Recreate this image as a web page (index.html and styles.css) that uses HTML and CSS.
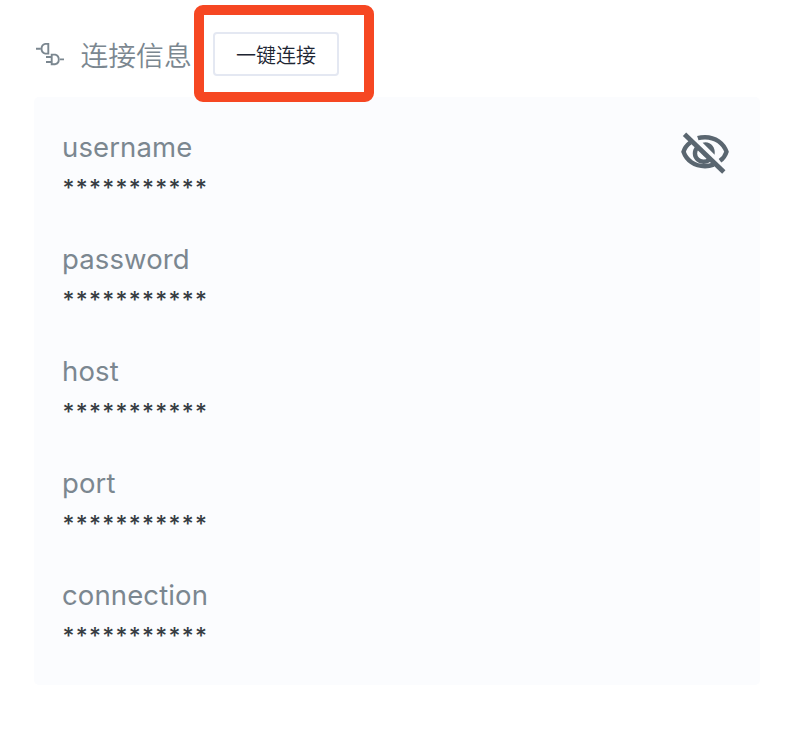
FILE: index.html
```html
<!DOCTYPE html>
<html lang="zh-CN">
<head>
<meta charset="utf-8">
<title>连接信息</title>
<link rel="stylesheet" href="styles.css">
</head>
<body>
<header class="header">
  <svg class="plug" viewBox="0 0 30 26" fill="none" stroke="currentColor" stroke-width="1.9">
    <path d="M0 8.7H4.5M12.3 3.9H9.3A5 5 0 0 0 9.3 13.6H12.3Z"/>
    <path d="M15.7 14.6H19.2A5 5 0 0 1 19.2 24.2H15.7ZM10 17H15.7M10 22H15.7M24 19.4H28"/>
  </svg>
  <h1 class="title">连接信息</h1>
  <div class="highlight"><button class="connect">一键连接</button></div>
</header>
<main class="panel">
  <dl class="fields">
    <div class="field"><dt>username</dt><dd>***********</dd></div>
    <div class="field"><dt>password</dt><dd>***********</dd></div>
    <div class="field"><dt>host</dt><dd>***********</dd></div>
    <div class="field"><dt>port</dt><dd>***********</dd></div>
    <div class="field"><dt>connection</dt><dd>***********</dd></div>
  </dl>
  <svg class="eye" viewBox="0 0 50 44" fill="none" stroke="currentColor" stroke-width="4.4">
    <path d="M10.3 11.5C7 14 4.5 17.3 3.5 20.8C6.5 29.5 14.5 35.2 25 35.2C28 35.2 31 34.6 33.6 33.6"/>
    <path d="M17.8 7.2C20 6.5 22.4 6.2 25 6.2C35.5 6.2 43.4 12.3 46.5 20.8C45.4 24.3 43 27.6 40 29.8"/>
    <path d="M17.3 16.5A8.2 8.2 0 0 0 29.5 28.2"/>
    <path d="M22.6 11.8C29 9.5 36 15.2 34.6 23.8Z" fill="currentColor" stroke="none"/>
    <path d="M21.8 18.5L28.5 25.1C25.8 27 21 23.8 21.8 18.5Z" fill="currentColor" stroke="none"/>
    <path d="M4.5 3.3L43.8 41" stroke-width="4.8"/>
  </svg>
</main>
</body>
</html>
```
FILE: styles.css
```css
* { box-sizing: border-box; }
body {
  margin: 0;
  background: #fff;
  font-family: Inter, "Noto Sans CJK SC", sans-serif;
}
.header {
  position: relative;
  z-index: 1;
  display: flex;
  height: 97px;
  padding: 5px 0 0 36px;
}
.plug {
  width: 30px;
  height: 26px;
  margin-top: 35px;
  color: #7b8790;
}
.title {
  width: 113.5px;
  margin: 31px 0 0 14.5px;
  font-size: 27.8px;
  line-height: 40px;
  font-weight: 350;
  white-space: nowrap;
  color: #7b8790;
}
.highlight {
  flex: none;
  width: 180px;
  height: 97px;
  padding: 17px 9px;
  border: 10px solid #f64722;
  border-radius: 9px;
}
.connect {
  display: block;
  width: 126px;
  height: 44px;
  padding: 1px 0 0;
  border: 2px solid #e4e8f2;
  border-radius: 4px;
  background: #fff;
  color: #1d2532;
  font: 350 20px/39px "Noto Sans CJK SC", sans-serif;
}
.panel {
  display: flex;
  justify-content: space-between;
  width: 726px;
  height: 588px;
  margin-left: 34px;
  padding: 28px 30px 0 28px;
  border-radius: 5px;
  background: #fbfcfe;
}
.fields { margin: 0; }
.field { height: 112px; }
dt {
  height: 44px;
  font-size: 27.5px;
  line-height: 44px;
  letter-spacing: 0.12px;
  color: #7b8790;
}
dd {
  margin: 0;
  padding: 1px 0 0 0.5px;
  font-size: 23px;
  font-weight: 500;
  line-height: 36px;
  letter-spacing: 1.28px;
  color: #363c42;
}
.eye {
  width: 50px;
  height: 44px;
  margin-top: 6px;
  color: #5a6670;
}
```
